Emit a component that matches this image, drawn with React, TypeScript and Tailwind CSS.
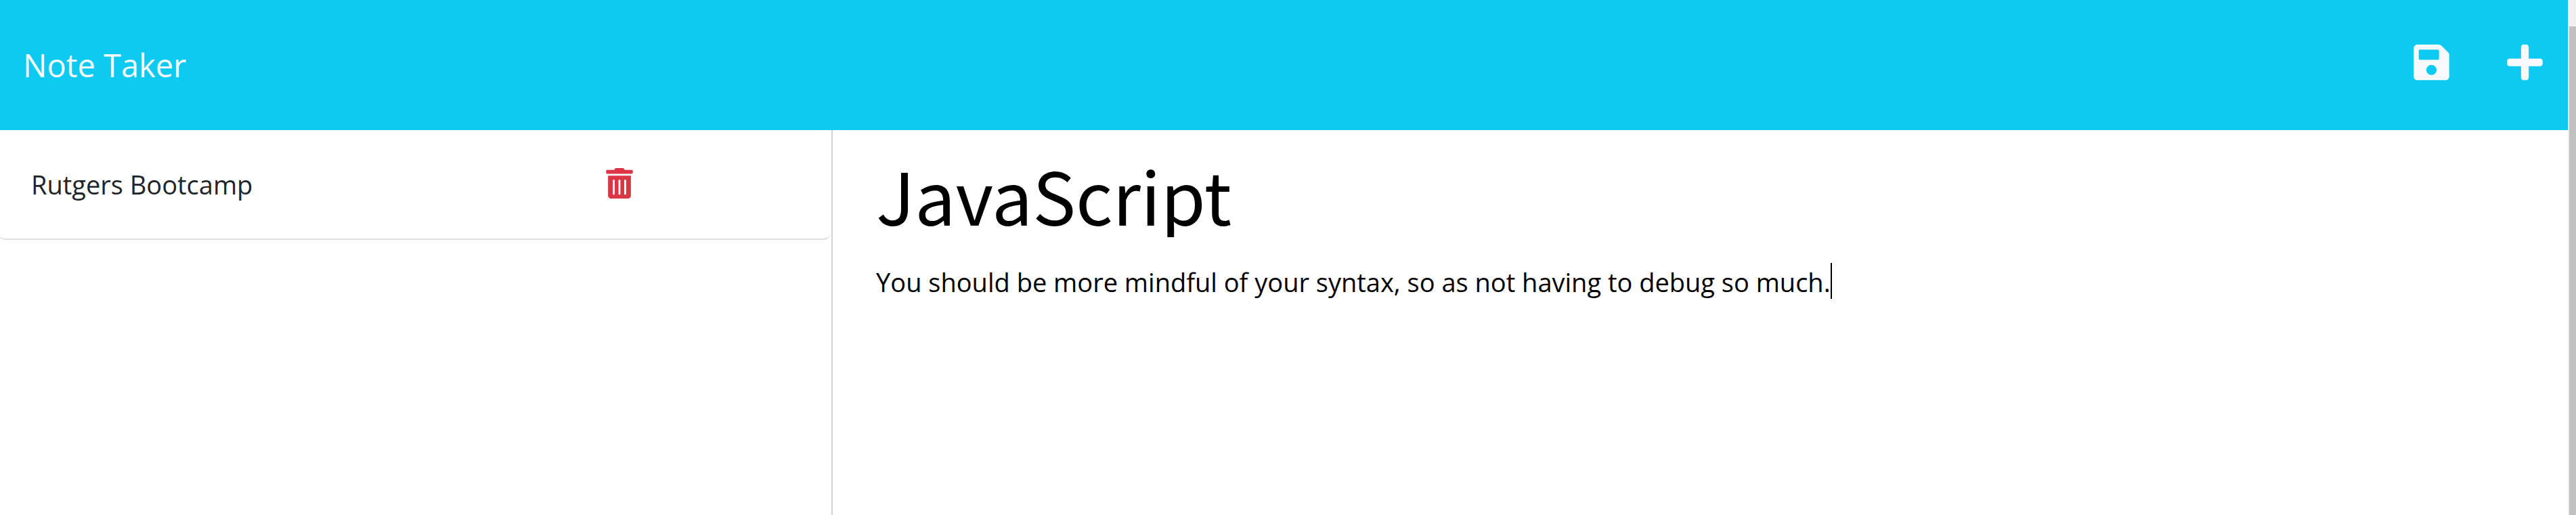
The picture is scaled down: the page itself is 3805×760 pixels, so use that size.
import { useState } from "react";
import { FaPlus, FaSave, FaTrashAlt } from "react-icons/fa";

const notes = [{ id: 1, title: "Rutgers Bootcamp" }];

function Header() {
  return (
    <header className="flex h-48 items-center justify-between bg-[#0dcaf0] pl-[34px] pr-[37px] text-[#f8f9fa]">
      <a href="#" className="text-[47px] leading-[72px]">
        Note Taker
      </a>
      <div className="mb-2 flex items-center gap-[85px]">
        <button type="button" aria-label="Save note">
          <FaSave className="h-[60px] w-[53px]" />
        </button>
        <button type="button" aria-label="New note">
          <FaPlus className="h-[60px] w-[53px]" />
        </button>
      </div>
    </header>
  );
}

function NoteList() {
  return (
    <aside className="w-[32.43%] shrink-0 overflow-hidden border-r-2 border-[#d3d3d3]">
      <ul className="-ml-1">
        {notes.map((note) => (
          <li
            key={note.id}
            className="flex h-[162px] items-center rounded-b-xl border-b-2 border-[#dfdfdf] pl-[50px]"
          >
            <span className="w-[71.8%] text-[38px] leading-[60px] text-[#212529]">{note.title}</span>
            <button type="button" aria-label="Delete note" className="mb-1 text-[#dc3545]">
              <FaTrashAlt className="h-[45px] w-10" />
            </button>
          </li>
        ))}
      </ul>
    </aside>
  );
}

function Editor() {
  const [title, setTitle] = useState("JavaScript");
  const [text, setText] = useState(
    "You should be more mindful of your syntax, so as not having to debug so much."
  );
  return (
    <main className="flex grow flex-col gap-[30px] px-16 pt-8 text-black">
      <input
        aria-label="Note title"
        value={title}
        onChange={(e) => setTitle(e.target.value)}
        className="h-[126px] w-full font-['Noto_Sans_CJK_SC',sans-serif] text-[107px] leading-[126px] outline-none"
      />
      <div className="flex items-start">
        <textarea
          aria-label="Note text"
          rows={1}
          value={text}
          onChange={(e) => setText(e.target.value)}
          className="field-sizing-content resize-none overflow-hidden text-[38px] leading-[72px] caret-transparent outline-none"
        />
        <span className="mt-2 h-[53px] w-0.5 bg-black" />
      </div>
    </main>
  );
}

export default function App() {
  return (
    <div className="flex min-h-screen bg-white font-['Open_Sans',sans-serif]">
      <div className="flex grow flex-col">
        <Header />
        <div className="flex grow">
          <NoteList />
          <Editor />
        </div>
      </div>
      <div className="flex w-3 shrink-0 bg-[#f0f0f0] pl-0.5 pt-[39px]">
        <div className="grow bg-[#c1c1c1]" />
      </div>
    </div>
  );
}
